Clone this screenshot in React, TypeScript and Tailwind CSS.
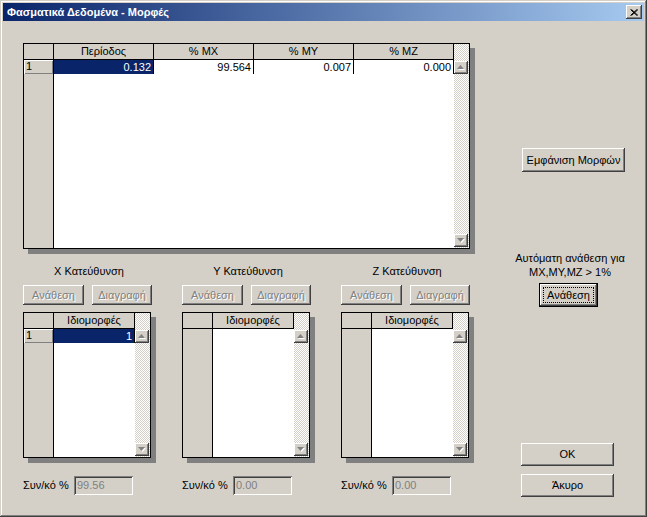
import React from "react";

const raised =
  "shadow-[inset_-1px_-1px_#404040,inset_1px_1px_#ffffff,inset_-2px_-2px_#808080,inset_2px_2px_#d4d0c8]";
const sunken =
  "shadow-[inset_1px_1px_#808080,inset_-1px_-1px_#ffffff,inset_2px_2px_#404040,inset_-2px_-2px_#d4d0c8]";
const checker =
  "[background-image:repeating-conic-gradient(#ffffff_0_25%,#d4d0c8_0_50%)] [background-size:2px_2px]";

function Arrow({ dir }: { dir: "up" | "down" }) {
  return (
    <div className={`w-[14px] h-[13px] bg-[#d4d0c8] ${raised} flex items-center justify-center`}>
      <svg width="8" height="5" viewBox="0 0 8 5">
        {dir === "up" ? (
          <>
            <polygon points="4.5,1 8,5 1,5" fill="#ffffff" />
            <polygon points="3.5,0 7,4 0,4" fill="#808080" />
          </>
        ) : (
          <>
            <polygon points="1,1 8,1 4.5,5" fill="#ffffff" />
            <polygon points="0,0 7,0 3.5,4" fill="#808080" />
          </>
        )}
      </svg>
    </div>
  );
}

type Cell = { text: string; sel?: boolean };
type Row = { head: string; cells: Cell[] };

function Grid({
  w,
  h,
  cols,
  colW,
  rows,
}: {
  w: number;
  h: number;
  cols: string[];
  colW: number;
  rows: Row[];
}) {
  return (
    <div
      className="flex border border-black bg-white shadow-[5px_5px_0_#808080]"
      style={{ width: w, height: h }}
    >
      <div className="flex flex-col flex-1 min-w-0">
        <div className="flex h-[16px] border-b border-black bg-[#d4d0c8]">
          <div className="w-[30px] shrink-0 border-r border-black" />
          {cols.map((c) => (
            <div
              key={c}
              className="shrink-0 border-r border-black text-center leading-[15px]"
              style={{ width: colW }}
            >
              {c}
            </div>
          ))}
        </div>
        <div className="flex flex-1">
          <div className="w-[30px] shrink-0 border-r border-black bg-[#d4d0c8] flex flex-col">
            {rows.map((r) => (
              <div
                key={r.head}
                className="h-[14px] pl-[2px] leading-[13px] shadow-[inset_1px_1px_#ffffff,inset_-1px_-1px_#808080]"
              >
                {r.head}
              </div>
            ))}
          </div>
          <div className="flex flex-col">
            {rows.map((r) => (
              <div key={r.head} className="flex h-[14px]">
                {r.cells.map((c, i) => (
                  <div
                    key={i}
                    className={`shrink-0 border-r border-black text-right pr-[2px] leading-[14px] ${
                      c.sel ? "bg-[#0a246a] text-white" : "bg-white"
                    }`}
                    style={{ width: colW }}
                  >
                    {c.text}
                  </div>
                ))}
              </div>
            ))}
          </div>
        </div>
      </div>
      <div className={`w-[15px] shrink-0 ${checker} flex flex-col justify-between items-start pt-[17px] pb-[1px]`}>
        <Arrow dir="up" />
        <Arrow dir="down" />
      </div>
    </div>
  );
}

function DisabledBtn({ label, w }: { label: string; w: number }) {
  return (
    <div
      className={`h-[20px] bg-[#d4d0c8] ${raised} flex items-center justify-center text-[#808080] [text-shadow:1px_1px_0_#ffffff]`}
      style={{ width: w }}
    >
      {label}
    </div>
  );
}

function Btn({ label, w, h, cls = "" }: { label: string; w: number; h: number; cls?: string }) {
  return (
    <div
      className={`bg-[#d4d0c8] ${raised} flex items-center justify-center ${cls}`}
      style={{ width: w, height: h }}
    >
      {label}
    </div>
  );
}

function Direction({
  title,
  rows,
  value,
}: {
  title: string;
  rows: Row[];
  value: string;
}) {
  return (
    <div className="w-[128px] flex flex-col">
      <div className="h-[14px] leading-[14px] text-center pl-[4px]">{title}</div>
      <div className="flex gap-[8px] mt-[7px] w-[130px]">
        <DisabledBtn label="Ανάθεση" w={61} />
        <DisabledBtn label="Διαγραφή" w={60} />
      </div>
      <div className="mt-[7px]">
        <Grid w={128} h={146} cols={["Ιδιομορφές"]} colW={81} rows={rows} />
      </div>
      <div className="flex items-center mt-[18px]">
        <div className="w-[51px] shrink-0">Συν/κό %</div>
        <div
          className={`w-[59px] h-[19px] bg-[#d4d0c8] ${sunken} pl-[3px] leading-[19px] text-[#808080]`}
        >
          {value}
        </div>
      </div>
    </div>
  );
}

export default function App() {
  return (
    <div
      className={`w-[647px] h-[517px] bg-[#d4d0c8] p-[3px] shadow-[inset_-1px_-1px_#404040,inset_1px_1px_#d4d0c8,inset_-2px_-2px_#808080,inset_2px_2px_#ffffff] font-['Liberation_Sans',Arial,sans-serif] text-[11px] text-black flex flex-col overflow-hidden`}
    >
      <div className="h-[18px] flex items-center justify-between pl-[4px] pr-[2px] bg-[linear-gradient(to_right,#0a246a,#a6caf0)]">
        <span className="text-white font-bold">Φασματικά Δεδομένα - Μορφές</span>
        <div className={`w-[16px] h-[14px] bg-[#d4d0c8] ${raised} flex items-center justify-center`}>
          <svg width="8" height="7" viewBox="0 0 8 7">
            <path d="M0.5 0.5 L7 6.5 M1.5 0.5 L8 6.5 M7 0.5 L0.5 6.5 M8 0.5 L1.5 6.5" stroke="#000" strokeWidth="1" />
          </svg>
        </div>
      </div>
      <div className="flex pl-[20px] pt-[22px]">
        <div className="w-[447px] shrink-0 flex flex-col">
          <Grid
            w={447}
            h={206}
            cols={["Περίοδος", "% MX", "% MY", "% MZ"]}
            colW={100}
            rows={[
              {
                head: "1",
                cells: [
                  { text: "0.132", sel: true },
                  { text: "99.564" },
                  { text: "0.007" },
                  { text: "0.000" },
                ],
              },
            ]}
          />
          <div className="flex gap-[31px] mt-[15px]">
            <Direction
              title="X Κατεύθυνση"
              rows={[{ head: "1", cells: [{ text: "1", sel: true }] }]}
              value="99.56"
            />
            <Direction title="Y Κατεύθυνση" rows={[]} value="0.00" />
            <Direction title="Z Κατεύθυνση" rows={[]} value="0.00" />
          </div>
        </div>
        <div className="w-[130px] ml-[35px] flex flex-col">
          <Btn label="Εμφάνιση Μορφών" w={103} h={24} cls="ml-[17px] mt-[105px]" />
          <div className="mt-[79px] text-center leading-[14px]">
            <div>Αυτόματη ανάθεση για</div>
            <div>MX,MY,MZ &gt; 1%</div>
          </div>
          <div className="ml-[34px] mt-[4px] w-[59px] h-[24px] border border-black relative">
            <div className={`w-full h-full bg-[#d4d0c8] ${raised} flex items-center justify-center`}>
              Ανάθεση
            </div>
            <div className="absolute inset-[3px] border border-dotted border-black" />
          </div>
          <Btn label="OK" w={93} h={23} cls="ml-[16px] mt-[136px]" />
          <Btn label="Άκυρο" w={93} h={23} cls="ml-[16px] mt-[8px]" />
        </div>
      </div>
    </div>
  );
}
